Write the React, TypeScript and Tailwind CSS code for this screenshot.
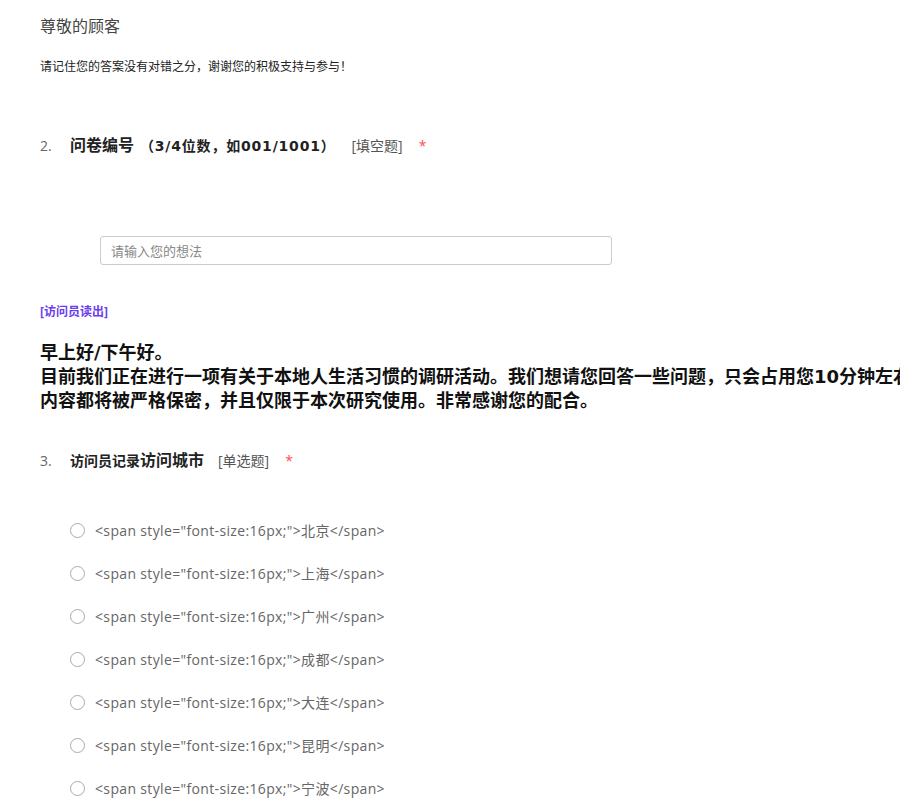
const CITIES = ["北京", "上海", "广州", "成都", "大连", "昆明", "宁波"];

const YAHEI = "font-['Open_Sans','Noto_Sans_CJK_SC',sans-serif]";

function Asterisk() {
  return <span className="ml-[16px] text-[14px] text-[#ff4d4f]">*</span>;
}

export default function App() {
  return (
    <main className={`h-[800px] w-[900px] overflow-hidden bg-white ${YAHEI} text-[#333]`}>
      <div className="pl-[40px] pt-[14px]">
        <h1 className="text-[16px] leading-[24px] text-[#444]">尊敬的顾客</h1>
        <p className="mt-[20px] text-[12px] leading-[18px] text-[#222]">
          请记住您的答案没有对错之分，谢谢您的积极支持与参与！
        </p>
      </div>

      {/* question 2 */}
      <section className="mt-[57px] pl-[40px]">
        <div className="flex items-baseline">
          <span className="w-[30px] text-[14px] text-[#666]">2.</span>
          <span className="text-[16px] font-bold text-[#222]">问卷编号</span>
          <span className="ml-[6px] font-['DejaVu_Sans','Noto_Sans_CJK_SC',sans-serif] text-[14px] font-bold tracking-[0.8px] text-[#222]">
            （3/4位数，如001/1001）
          </span>
          <span className="ml-[16px] text-[14px] text-[#555]">[填空题]</span>
          <Asterisk />
        </div>
        <div className="mt-[79px] pl-[60px]">
          <input
            placeholder="请输入您的想法"
            className="h-[29px] w-[512px] rounded-[3px] border border-[#ccc] px-[10px] text-[13px] text-[#333] outline-none placeholder:text-[#888]"
          />
        </div>
      </section>

      {/* interviewer script */}
      <section className="mt-[38px] pl-[40px]">
        <p className="text-[12px] font-bold text-[#6a3cf0]">[访问员读出]</p>
        <div className="mt-[20px] whitespace-nowrap font-['DejaVu_Sans','Noto_Sans_CJK_SC',sans-serif] text-[18px] font-bold leading-[24px] text-[#111]">
          <p>早上好/下午好。</p>
          <p className="w-[860px] overflow-hidden">
            目前我们正在进行一项有关于本地人生活习惯的调研活动。我们想请您回答一些问题，只会占用您10分钟左右的时间。
          </p>
          <p>内容都将被严格保密，并且仅限于本次研究使用。非常感谢您的配合。</p>
        </div>
      </section>

      {/* question 3 */}
      <section className="mt-[35px] pl-[40px]">
        <div className="flex items-baseline">
          <span className="w-[30px] text-[14px] text-[#666]">3.</span>
          <span className="text-[14px] font-bold text-[#222]">访问员记录</span>
          <span className="text-[16px] font-bold text-[#222]">访问城市</span>
          <span className="ml-[14px] text-[14px] text-[#555]">[单选题]</span>
          <Asterisk />
        </div>
        <ul className="mt-[47px] flex flex-col gap-[21px] pl-[30px]">
          {CITIES.map((c) => (
            <li key={c} className="flex h-[22px] items-center">
              <span className="h-[15px] w-[15px] rounded-full border border-[#aaa] bg-white" />
              <span className="ml-[10px] text-[14px] tracking-[0.35px] text-[#666]">
                {`<span style="font-size:16px;">${c}</span>`}
              </span>
            </li>
          ))}
        </ul>
      </section>
    </main>
  );
}
